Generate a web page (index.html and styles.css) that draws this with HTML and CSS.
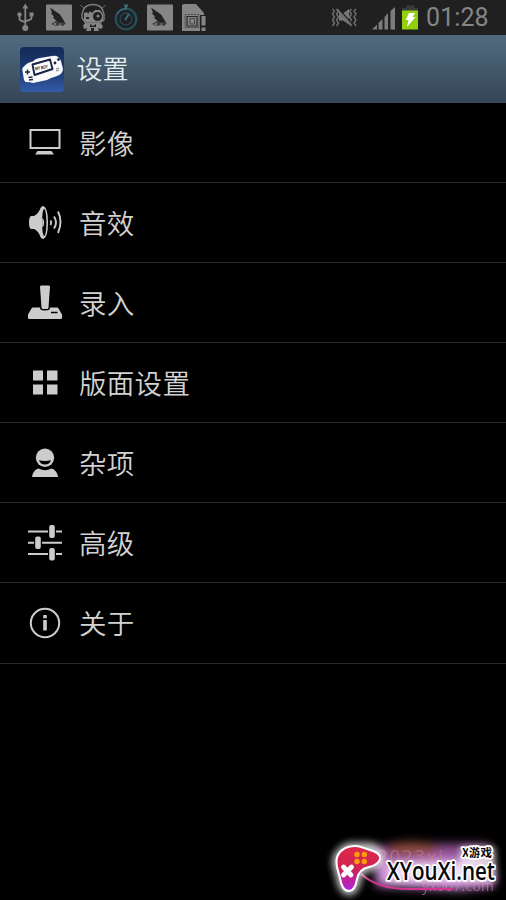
FILE: index.html
```html
<!DOCTYPE html>
<html lang="zh-CN">
<head>
<meta charset="utf-8">
<title>设置</title>
<link rel="stylesheet" href="styles.css">
</head>
<body>
<div class="screen">
  <div class="status">
    <svg class="usb" width="18" height="35" viewBox="16 0 18 35" fill="none" stroke="#858585" stroke-width="1.8">
      <path d="M25.3 8v20M19.5 14v4.5q0 2 2 2.4l3.8 1.3M31.5 14v3.500q0 2-2 2.400l-4.200 1.500"/>
      <path d="M25.300 3.500l3 5h-6z" fill="#858585" stroke="none"/>
      <circle cx="25.300" cy="28" r="3" fill="#858585" stroke="none"/>
      <circle cx="19.500" cy="14.500" r="2.200" fill="#858585" stroke="none"/>
      <path d="M29.500 12.500h4v4h-4z" fill="#858585" stroke="none"/>
    </svg>
    <svg class="app" width="27" height="35" viewBox="46 0 27 35">
      <rect x="46" y="4.500" width="26" height="26" rx="1" fill="#858585"/>
      <path d="M50 7.500l10 7 5 8-3 1-4-1-5-5 1-1-3-3 1-1z" fill="#222"/>
      <path d="M51 24l5-3 4 2 3-1 3 1-3 3-3-1-4 1z" fill="#3a3a3a"/>
      <circle cx="55" cy="24" r="1.300" fill="#777"/><circle cx="60.500" cy="24" r="1" fill="#777"/>
    </svg>
    <svg class="robot" width="28" height="35" viewBox="79 0 28 35">
      <path d="M82 18V14C83 7 87 4.500 93 4.500S103 8 104 14v6l-3 2H85z" fill="none" stroke="#858585" stroke-width="1.300"/>
      <path d="M80 5l4 3M106 5l-4 3" stroke="#666"/>
      <path d="M84 13l3-1 1 2 2-3 2 2 3-3h5l3 4v6l-3 2H86l-2-2z" fill="#858585"/>
      <circle cx="97.500" cy="16.500" r="4.500" fill="#202020"/><circle cx="98" cy="16" r="1.500" fill="#888"/>
      <path d="M86 17h3v2h-3z" fill="#202020"/>
      <path d="M85 23h16l2 4-2 2-3-1 1 3h-5v-3h-3v3h-5l1-3-3 1-1-3z" fill="#858585"/>
      <path d="M90 24l3 2 3-2v3h-6z" fill="#202020"/>
    </svg>
    <svg class="watch" width="26" height="35" viewBox="113 0 26 35" fill="none">
      <circle cx="126" cy="19" r="10.300" stroke="#26505e" stroke-width="2.200"/>
      <circle cx="126" cy="19" r="6" stroke="#244556" stroke-width="1.300"/>
      <path d="M126 9V4.500M124 5.500h4" stroke="#3d6f73" stroke-width="2"/>
      <path d="M125 20l4-6" stroke="#386b80" stroke-width="2"/>
      <path d="M117 14q3-5 9-5" stroke="#427477"/>
    </svg>
    <svg class="app second" width="27" height="35" viewBox="46 0 27 35">
      <rect x="46" y="4.500" width="26" height="26" rx="1" fill="#858585"/>
      <path d="M50 7.500l10 7 5 8-3 1-4-1-5-5 1-1-3-3 1-1z" fill="#222"/>
      <path d="M51 24l5-3 4 2 3-1 3 1-3 3-3-1-4 1z" fill="#3a3a3a"/>
      <circle cx="55" cy="24" r="1.300" fill="#777"/><circle cx="60.500" cy="24" r="1" fill="#777"/>
    </svg>
    <svg class="sim" width="26" height="35" viewBox="181 0 26 35">
      <path d="M184 4h12l8 9v2h-4v16h-18V6q0-2 2-2z" fill="#858585"/>
      <path d="M185 14.500h14v13h-14z" fill="none" stroke="#444" stroke-width="1" stroke-dasharray="2 1"/>
      <path d="M187 16.500h10v9.500h-10z" fill="none" stroke="#292929" stroke-width="1.200"/>
      <path d="M190 18.500h4.500v5.500H190z" fill="none" stroke="#444"/>
      <path d="M201.500 16h4v9.500h-4zM201.500 27.500h4V31h-4z" fill="#858585"/>
    </svg>
    <svg class="mute" width="28" height="35" viewBox="331 0 28 35" fill="none" stroke="#6f6f6f" stroke-width="1.400">
      <path d="M332.500 9l2 2-2 3 2 3-2 3 2 3-2 3M336.500 9l2 2-2 3 2 3-2 3 2 3-2 3M351.500 9l-2 2 2 3-2 3 2 3-2 3 2 3M356 9l-2 2 2 3-2 3 2 3-2 3 2 3"/>
      <path d="M339 13.500h4l6-4.500v15.500l-6-4h-4z" fill="#777" stroke="none"/>
      <path d="M338.500 9l13 14" stroke="#202020" stroke-width="1.500"/><path d="M337 9.500l14 15.500" stroke-width="2.200"/>
    </svg>
    <svg class="signal" width="24" height="35" viewBox="372 0 24 35" fill="#7c7c7c">
      <path d="M372 29.500l5-5v5zM378.500 23l4-4v10.500h-4zM384.500 17l3.500-4v16.500h-3.500zM390.500 11l4.500-4v22.500h-4.500z"/>
    </svg>
    <svg class="battery" width="17" height="35" viewBox="402 0 17 35">
      <path d="M406 5.500h8V8h4v3h-16V8h4z" fill="#3a3a3a"/>
      <path d="M402 10.500h16v19h-16z" fill="#94cf0c"/>
      <path d="M409 13h6l-2.500 4h3L407 27l1.500-7h-3z" fill="#fff"/>
    </svg>
    <span class="clock">01:28</span>
  </div>

  <div class="header">
    <svg width="44" height="45" viewBox="0 0 44 45">
      <defs><linearGradient id="tile" x2="0" y2="1"><stop offset="0" stop-color="#142a57"/><stop offset=".6" stop-color="#1e3d78"/><stop offset="1" stop-color="#355caa"/></linearGradient></defs>
      <rect width="44" height="45" rx="4" fill="url(#tile)"/>
      <path d="M4 19.500q3-4 9-5 2-3 7-3.500l12-2q4-1 6 1 2 1 3 4l2 8q0 5-6 7l-6 2-4 2-14 3-4-1q-4 1-5-2L2.500 24q-1-3 1.500-4.500z" fill="#f8f8fb"/>
      <path d="M12.500 17.500l17.500-5 2.500 9.500-18 6z" fill="#fff" stroke="#172342" stroke-width="1.900" stroke-linejoin="round"/>
      <text class="screen-label" x="15.500" y="23.500" transform="rotate(-11 15.500 23.500)" textLength="13" lengthAdjust="spacingAndGlyphs">MY BOY</text>
      <path d="M5 25h5M7.500 22.500v5M8.500 30.500l4-.5M9 33l4-.5" stroke="#172342" stroke-width="1.400"/>
      <circle cx="35" cy="16" r="1.400" fill="#172342"/><circle cx="38.500" cy="12.500" r="1.400" fill="#172342"/>
      <path d="M36 22l3-1M36 24l3-1" stroke="#767ba2"/>
    </svg>
    <h1>设置</h1>
  </div>

  <ul class="menu">
    <li>
      <svg viewBox="27 122 36 40"><path d="M30.500 130h29v18h-29z" fill="none" stroke="#ccc" stroke-width="2"/><path d="M37.500 151h14l2.500 3.500H35z"/></svg>
      <span>影像</span>
    </li>
    <li>
      <svg viewBox="27 202 36 40"><path d="M31 216h3q5-3 6.500-8 1-2 3-2 4.500 2 4.500 16.500T43.500 239q-2 0-3-2-2-6-6.500-8h-3q-2-1-2-6.500t2-6.500z"/><ellipse cx="44.200" cy="222.500" rx="2.200" ry="13.500" fill="#000"/><path d="M42.200 218q2 1 2 4.500t-2 5z"/><path d="M50.500 220.500q1.200 2 0 4.500M54 216.500q4 6 0 12M58 211.500q5 10 0 21.500" fill="none" stroke="#ccc" stroke-width="1.900"/></svg>
      <span>音效</span>
    </li>
    <li>
      <svg viewBox="27 282 36 40"><path d="M41 285.500h8q1 0 1 1.500l-1.500 20.500q-.3 1.500-1.500 1.500h-4q-1.300 0-1.500-1.500L40 287q0-1.500 1-1.500z"/><path d="M33 307.500h7l.5 2q1 1 4.500 1t4.500-1l.5-2h7q1 0 1.500 1l3.500 6q.5 4.500-1 4.500H29q-1.500 0-1-4.500l3.500-6q.5-1 1.500-1z"/><path d="M51 312.500h6.500" stroke="#000" stroke-width="1.500"/></svg>
      <span>录入</span>
    </li>
    <li>
      <svg viewBox="27 362 36 40"><path d="M33 370.500h10v10H33zM47 370.500h10.500v10H47zM33 384.500h10v10H33zM47 384.500h10.500v10H47z"/></svg>
      <span>版面设置</span>
    </li>
    <li>
      <svg viewBox="27 442 36 40"><circle cx="45" cy="457.700" r="9.200"/><path d="M39 460.300q6 1.500 12 0-1.200 4.200-6 4.200t-6-4.200z" fill="#000"/><path d="M32 477q1-7 6.500-8.500 6.500 3.500 13 0Q57 470 58 477z"/></svg>
      <span>杂项</span>
    </li>
    <li>
      <svg viewBox="27 522 36 40"><path d="M28 531.500h20M56 531.500h6M28 542.700h6M42 542.700h20M28 554h20M56 554h6" stroke="#ccc" stroke-width="2"/><rect x="49.200" y="525" width="5.600" height="13" rx="2"/><rect x="35.200" y="536.500" width="5.600" height="12.500" rx="2"/><rect x="49.200" y="548" width="5.600" height="12.500" rx="2"/></svg>
      <span>高级</span>
    </li>
    <li>
      <svg viewBox="27 603 36 40"><circle cx="45" cy="623" r="14.200" fill="none" stroke="#ccc" stroke-width="2"/><path d="M43.200 615h3.600v3.200h-3.600zM43.200 620h3.600v10.500h-3.600z"/></svg>
      <span>关于</span>
    </li>
  </ul>

  <svg class="watermark" width="186" height="80" viewBox="320 820 186 80">
    <defs>
      <linearGradient id="pad" x2="0" y2="1"><stop stop-color="#df2846"/><stop offset=".5" stop-color="#cf2454"/><stop offset="1" stop-color="#ad22e4"/></linearGradient>
      <filter id="soft" x="-50%" y="-50%" width="200%" height="200%"><feGaussianBlur stdDeviation="5"/></filter>
      <filter id="glow" x="-30%" y="-30%" width="160%" height="160%"><feGaussianBlur stdDeviation="3.500"/></filter>
    </defs>
    <g filter="url(#soft)">
      <path d="M374 848q30-8 62-4h52l8 40-45 5-75-3z" fill="#8e4f92"/>
      <ellipse cx="412" cy="849" rx="26" ry="7" fill="#8c4a3a"/>
      <path d="M376 862l70-4 48 10v18l-36 4-80-4z" fill="#cf92da"/>
    </g>
    <text class="ghost" x="377" y="863" textLength="66" aria-hidden="true">2023xi</text>
    <text class="ghost bottom" x="422" y="891" textLength="72" aria-hidden="true">yx007.com</text>
    <path d="M361 874q18 16 52 15h40" fill="none" stroke="#d43592" stroke-width="2"/>
    <path d="M349 846h22q10 5 10 11t-9 10q-14 2-14 13-3 12-9 12-8-1-10-17l-3-10q-2-12 13-19z" fill="#fff" stroke="#fff" stroke-width="7" opacity=".75" filter="url(#glow)"/>
    <path d="M461 847h34v34H389v-17h70z" fill="#fff" opacity=".7" filter="url(#glow)"/>
    <path d="M348 847q8-2 13 0l12 4q8 3 7 8-2 6-11 8-10 2-12 12-2 12-8 12-7 0-9-13l-3-11q-3-15 11-20z" fill="url(#pad)" stroke="#fff" stroke-width="2"/>
    <path d="M343.500 867l7.500 8M351.500 867l-8 8" stroke="#fff" stroke-width="4.800" stroke-linecap="round"/>
    <g fill="#ff9d08"><circle cx="357" cy="854.500" r="2.700"/><circle cx="364.300" cy="854.500" r="2.700"/><circle cx="357" cy="861.500" r="2.700"/><circle cx="364.300" cy="861.500" r="2.700"/></g>
    <text class="site outlined" x="387" y="880" textLength="108" lengthAdjust="spacingAndGlyphs">XYouXi.net</text>
    <text class="caption outlined" x="462" y="856.500" textLength="30">X游戏</text>
  </svg>
</div>
</body>
</html>
```

FILE: styles.css
```css
* { box-sizing: border-box; }
body { margin: 0; background: #000; }
.screen {
  position: relative;
  width: 506px;
  height: 900px;
  overflow: hidden;
  background: #000;
  font-family: Roboto, "Noto Sans CJK SC", sans-serif;
}
svg { display: block; flex: none; }
.status {
  display: flex;
  height: 35px;
  padding-left: 16px;
  background: #202020;
}
.app { margin-left: 12px; }
.robot { margin-left: 6px; }
.watch { margin-left: 6px; }
.app.second { margin-left: 8px; }
.sim { margin-left: 7px; }
.mute { margin-left: 124px; }
.signal { margin-left: 13px; }
.battery { margin-left: 6px; }
.clock {
  margin-left: 7px;
  color: #858585;
  font-size: 25px;
  line-height: 35px;
  letter-spacing: .1px;
}
.header {
  display: flex;
  align-items: center;
  height: 68px;
  padding-left: 20px;
  background: linear-gradient(#50697e, #4b6578 20%, #394a5c 85%, #374757);
}
.screen-label { font: bold 5px "Liberation Sans", sans-serif; fill: #222; }
h1 {
  margin: 2px 0 0 12.500px;
  color: #e8edf0;
  font-size: 26px;
  font-weight: 350;
  line-height: 40px;
}
.menu { margin: 0; padding: 0; list-style: none; }
.menu li {
  display: flex;
  align-items: center;
  height: 80.080px;
  padding: 0 0 1px 27px;
  border-bottom: 1px solid #292929;
  color: #d2d2d2;
  font-size: 27.500px;
  font-weight: 350;
  letter-spacing: .3px;
}
.menu svg { width: 36px; height: 40px; margin-right: 16px; fill: #ccc; }
.menu span { padding-bottom: 1px; }
.watermark { position: absolute; right: 0; bottom: 0; }
.site { font: 600 24.500px "Open Sans", sans-serif; fill: #080808; }
.caption { font: bold 11.500px "Noto Sans CJK SC", sans-serif; fill: #080808; }
.outlined { stroke: #fff; stroke-width: 3.500px; stroke-linejoin: round; paint-order: stroke; }
.ghost { font: 19px "Open Sans", sans-serif; fill: #c07f8d; opacity: .6; }
.bottom { font-size: 14px; fill: #d97cc3; }
```
